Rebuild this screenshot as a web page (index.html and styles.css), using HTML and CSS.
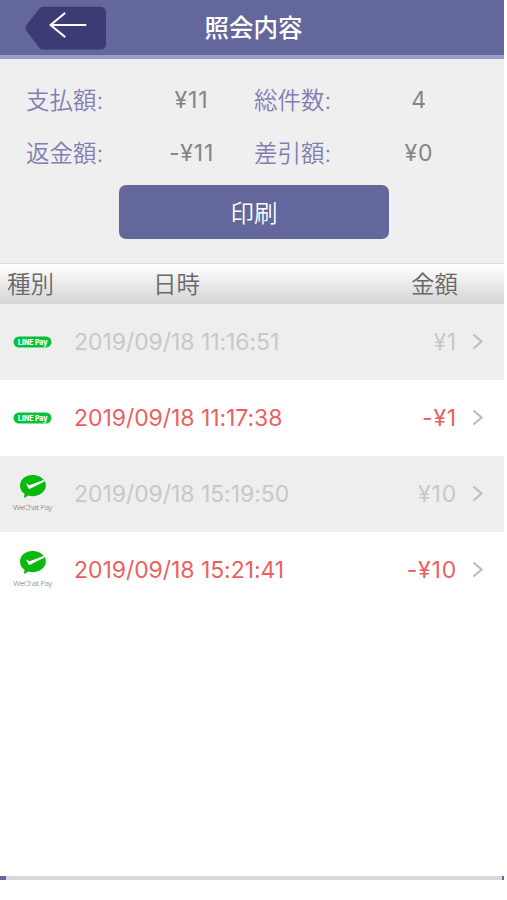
FILE: index.html
```html
<!DOCTYPE html>
<html lang="ja">
<head>
  <meta charset="utf-8">
  <title>照会内容</title>
  <link rel="stylesheet" href="styles.css">
</head>
<body>

<div class="screen">
  <header class="header">
    <a class="back" href="#" aria-label="戻る">
      <svg width="82" height="44" viewBox="0 0 82 44">
        <path class="back-shape" d="M18 .7H75Q81 .7 81 6.7V37.500Q81 43.500 75 43.500H18Q16 43.500 14.500 42L1.500 25Q-.3 22 1.500 19L14.500 2.500Q16 .7 18 .7Z"/>
        <path class="back-arrow" d="M60.500 19H25.500M39.500 7.500L25.500 19L39.500 30.500"/>
      </svg>
    </a>
    <h1>照会内容</h1>
  </header>

  <section class="summary">
    <div class="totals">
      <span class="label">支払額:</span><span class="value">¥11</span>
      <span class="label">総件数:</span><span class="value">4</span>
      <span class="label">返金額:</span><span class="value">-¥11</span>
      <span class="label">差引額:</span><span class="value">¥0</span>
    </div>
    <button class="print" type="button">印刷</button>
  </section>

  <div class="list-head">
    <span class="head-type">種別</span>
    <span class="head-date">日時</span>
    <span class="head-amount">金額</span>
  </div>

  <div class="list">
    <div class="row paid">
      <div class="logo">
        <svg width="40" height="12" viewBox="0 0 40 12">
          <rect class="line-bg" x=".5" y=".5" width="38" height="11" rx="5.500"/>
          <text class="line-text" x="5" y="8.600" textLength="29.500" lengthAdjust="spacingAndGlyphs">LINE Pay</text>
        </svg>
      </div>
      <span class="date">2019/09/18 11:16:51</span>
      <span class="amount">¥1</span>
      <svg class="chevron" width="12" height="18" viewBox="0 0 12 18"><path d="M1.500 1.500L9.500 8.500L1.500 15.500"/></svg>
    </div>

    <div class="row refund">
      <div class="logo">
        <svg width="40" height="12" viewBox="0 0 40 12">
          <rect class="line-bg" x=".5" y=".5" width="38" height="11" rx="5.500"/>
          <text class="line-text" x="5" y="8.600" textLength="29.500" lengthAdjust="spacingAndGlyphs">LINE Pay</text>
        </svg>
      </div>
      <span class="date">2019/09/18 11:17:38</span>
      <span class="amount">-¥1</span>
      <svg class="chevron" width="12" height="18" viewBox="0 0 12 18"><path d="M1.500 1.500L9.500 8.500L1.500 15.500"/></svg>
    </div>

    <div class="row paid">
      <div class="logo">
        <svg width="40" height="26" viewBox="0 0 40 26">
          <path class="wechat-bg" d="M19.500 1C12.500 1 7 5.600 7 11.500C7 15 8.700 17.800 11.500 19.800L11 24L15.500 21.600C16.800 22 18.100 22.200 19.500 22.200C26.800 22.200 32.800 17.500 32.800 11.500C32.800 10 32.500 8.800 32 7.600C29.800 3.600 25 1 19.500 1Z"/>
          <path class="wechat-check" d="M13 9.500L16.500 11.200L30.500 5.900L31.500 7.500L17.500 14.600Q16 15.300 15.300 13.900Z"/>
        </svg>
        <div class="wechat-text">WeChat Pay</div>
      </div>
      <span class="date">2019/09/18 15:19:50</span>
      <span class="amount">¥10</span>
      <svg class="chevron" width="12" height="18" viewBox="0 0 12 18"><path d="M1.500 1.500L9.500 8.500L1.500 15.500"/></svg>
    </div>

    <div class="row refund">
      <div class="logo">
        <svg width="40" height="26" viewBox="0 0 40 26">
          <path class="wechat-bg" d="M19.500 1C12.500 1 7 5.600 7 11.500C7 15 8.700 17.800 11.500 19.800L11 24L15.500 21.600C16.800 22 18.100 22.200 19.500 22.200C26.800 22.200 32.800 17.500 32.800 11.500C32.800 10 32.500 8.800 32 7.600C29.800 3.600 25 1 19.500 1Z"/>
          <path class="wechat-check" d="M13 9.500L16.500 11.200L30.500 5.900L31.500 7.500L17.500 14.600Q16 15.300 15.300 13.900Z"/>
        </svg>
        <div class="wechat-text">WeChat Pay</div>
      </div>
      <span class="date">2019/09/18 15:21:41</span>
      <span class="amount">-¥10</span>
      <svg class="chevron" width="12" height="18" viewBox="0 0 12 18"><path d="M1.500 1.500L9.500 8.500L1.500 15.500"/></svg>
    </div>
  </div>

  <div class="bottom-line"></div>
</div>

</body>
</html>
```

FILE: styles.css
```css
* {
  box-sizing: border-box;
}

body {
  margin: 0;
  background-color: #fff;
  font-family: Inter, "Noto Sans CJK JP", sans-serif;
  font-size: 23.5px;
}

.screen {
  width: 504px;
  height: 880px;
  display: flex;
  flex-direction: column;
}

.header {
  height: 59px;
  flex: none;
  display: grid;
  grid-template-columns: 127px 1fr 124px;
  align-items: center;
  background-color: #63679b;
  border-bottom: 4px solid #9a9dcc;
}

.header h1 {
  margin: 0;
  padding-top: 2px;
  font-size: 24.5px;
  font-weight: 500;
  line-height: 53px;
  text-align: center;
  color: #fff;
}

.back {
  height: 44px;
  margin-left: 25px;
}

.back svg {
  display: block;
}

.back-shape {
  fill: #3c3b76;
}

.back-arrow {
  fill: none;
  stroke: #fff;
  stroke-width: 2.2;
  stroke-linecap: round;
  stroke-linejoin: round;
}

.summary {
  height: 204px;
  flex: none;
  padding-top: 15px;
  background-color: #efefef;
}

.totals {
  display: grid;
  grid-template-columns: 103px 125px 103px 124px;
  grid-auto-rows: 53px;
  padding-left: 26px;
  line-height: 53px;
}

.label {
  font-weight: 350;
  color: #827eb3;
}

.value {
  font-size: 23px;
  letter-spacing: 0.8px;
  text-align: center;
  color: #858585;
}

.print {
  display: block;
  width: 270px;
  height: 54px;
  margin: 5px 0 0 119px;
  padding: 0;
  border: 0;
  border-radius: 7px;
  background-color: #63679b;
  color: #fff;
  font: inherit;
  font-weight: 350;
}

.list-head {
  height: 41px;
  flex: none;
  display: flex;
  padding: 0 46px 0 7px;
  border-top: 1px solid #dcdcdc;
  background: linear-gradient(#fff, #d4d4d4);
  color: #686868;
  font-weight: 350;
  line-height: 41px;
}

.head-date {
  margin-left: 99px;
}

.head-amount {
  margin-left: auto;
}

.row {
  height: 76px;
  display: flex;
  align-items: center;
  padding: 0 20px 0 13px;
}

.row.paid {
  background-color: #eee;
  color: #c8c8c8;
}

.row.refund {
  color: #ed5f5f;
}

.logo {
  width: 61px;
}

.logo svg {
  display: block;
}

.line-bg {
  fill: #06c13a;
}

.line-text {
  fill: #fff;
  font: 800 7.5px Inter, sans-serif;
}

.wechat-bg {
  fill: #09b90b;
}

.wechat-check {
  fill: #fff;
}

.wechat-text {
  height: 14px;
  color: #666;
  font: 300 8px/14px "Open Sans", sans-serif;
  letter-spacing: -0.4px;
  white-space: nowrap;
}

.date,
.amount {
  font-size: 23px;
}

.date {
  letter-spacing: -0.06px;
}

.amount {
  margin-left: auto;
  letter-spacing: 0.8px;
}

.chevron {
  margin-left: 15px;
  fill: none;
  stroke: #bdbdbd;
  stroke-width: 2.2;
}

.bottom-line {
  height: 4px;
  margin-top: auto;
  border: solid #63679b;
  border-width: 0 2px 0 6px;
  background-color: #d8d8dc;
}
```
